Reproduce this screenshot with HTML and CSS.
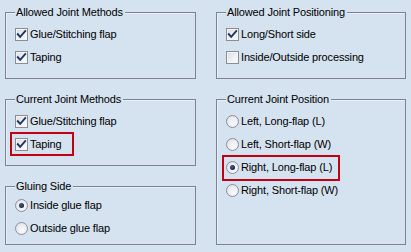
FILE: index.html
```html
<!DOCTYPE html>
<html>
<head>
<meta charset="utf-8">
<link rel="stylesheet" href="styles.css">
</head>
<body>
<div class="page">
  <div class="col col-left">
    <div class="group g-short">
      <div class="title">Allowed Joint Methods</div>
      <div class="rows">
        <div class="row"><span class="cb"><svg viewBox="0 0 11 11"><path d="M1.8 5.2 L4.2 7.8 L9.2 2.2"/></svg></span><span class="lbl">Glue/Stitching flap</span></div>
        <div class="row"><span class="cb"><svg viewBox="0 0 11 11"><path d="M1.8 5.2 L4.2 7.8 L9.2 2.2"/></svg></span><span class="lbl">Taping</span></div>
      </div>
    </div>
    <div class="group g-short">
      <div class="title">Current Joint Methods</div>
      <div class="rows">
        <div class="row"><span class="cb"><svg viewBox="0 0 11 11"><path d="M1.8 5.2 L4.2 7.8 L9.2 2.2"/></svg></span><span class="lbl">Glue/Stitching flap</span></div>
        <div class="row hl hl-a"><span class="cb"><svg viewBox="0 0 11 11"><path d="M1.8 5.2 L4.2 7.8 L9.2 2.2"/></svg></span><span class="lbl">Taping</span></div>
      </div>
    </div>
    <div class="group g-glue">
      <div class="title">Gluing Side</div>
      <div class="rows rows-tight">
        <div class="row"><span class="rb on"></span><span class="lbl">Inside glue flap</span></div>
        <div class="row"><span class="rb"></span><span class="lbl">Outside glue flap</span></div>
      </div>
    </div>
  </div>
  <div class="col col-right">
    <div class="group g-short">
      <div class="title">Allowed Joint Positioning</div>
      <div class="rows">
        <div class="row"><span class="cb"><svg viewBox="0 0 11 11"><path d="M1.8 5.2 L4.2 7.8 L9.2 2.2"/></svg></span><span class="lbl">Long/Short side</span></div>
        <div class="row"><span class="cb"></span><span class="lbl">Inside/Outside processing</span></div>
      </div>
    </div>
    <div class="group g-tall">
      <div class="title">Current Joint Position</div>
      <div class="rows">
        <div class="row"><span class="rb"></span><span class="lbl">Left, Long-flap (L)</span></div>
        <div class="row"><span class="rb"></span><span class="lbl">Left, Short-flap (W)</span></div>
        <div class="row hl hl-b"><span class="rb on"></span><span class="lbl">Right, Long-flap (L)</span></div>
        <div class="row"><span class="rb"></span><span class="lbl">Right, Short-flap (W)</span></div>
      </div>
    </div>
  </div>
</div>
</body>
</html>
```

FILE: styles.css
```css
html, body {
  margin: 0;
  padding: 0;
  background: #d5e2f0;
}
body {
  width: 411px;
  height: 252px;
  overflow: hidden;
  font-family: "Liberation Sans", Arial, sans-serif;
  font-size: 11px;
  letter-spacing: -0.15px;
  color: #000;
}
.page {
  display: flex;
  gap: 20px;
  padding: 12px 0 0 5px;
}
.col {
  display: flex;
  flex-direction: column;
  gap: 20px;
}
.col-left { width: 191px; }
.col-right { width: 190px; }
.group {
  box-sizing: border-box;
  border: 1px solid #7a8494;
  box-shadow: inset 1px 1px 0 #e6eef7;
  padding: 0 9px;
}
.g-short { height: 67px; }
.g-glue { height: 59px; }
.g-tall { height: 146px; }
.title {
  margin: -7px 0 0 0;
  padding: 0 2px 0 1px;
  width: max-content;
  line-height: 13px;
  background: #d5e2f0;
}
.rows {
  margin-top: 4px;
  display: flex;
  flex-direction: column;
}
.rows-tight { margin-top: 1px; }
.row {
  position: relative;
  display: flex;
  align-items: center;
  height: 23px;
  width: max-content;
}
.lbl {
  margin-left: 2px;
  line-height: 13px;
}
.cb {
  box-sizing: border-box;
  width: 13px;
  height: 13px;
  border: 1px solid #8a8d92;
  background: linear-gradient(135deg, #d9dbdf 0%, #f2f3f5 60%, #fbfbfb 100%);
  box-shadow: inset 0 0 0 1px #f6f6f6;
  display: flex;
}
.cb svg {
  width: 11px;
  height: 11px;
}
.cb path {
  fill: none;
  stroke: #1d3565;
  stroke-width: 1.9;
  stroke-linecap: square;
  stroke-linejoin: miter;
}
.rb {
  box-sizing: border-box;
  width: 13px;
  height: 13px;
  border-radius: 50%;
  border: 1px solid #8c9096;
  background: radial-gradient(circle at 60% 65%, #fbfbfc 0%, #eef0f4 40%, #d8dbe3 100%);
  display: flex;
  align-items: center;
  justify-content: center;
}
.rb.on::after {
  content: "";
  width: 5px;
  height: 5px;
  border-radius: 50%;
  background: radial-gradient(circle at 40% 40%, #4a5e86 0%, #1a2a4c 60%, #0f1a33 100%);
}
.hl::after {
  content: "";
  position: absolute;
  border: 2px solid #c10012;
}
.hl-a::after {
  top: -1px;
  bottom: 0;
  left: -5px;
  right: -12px;
}
.hl-b::after {
  top: -1px;
  bottom: -2px;
  left: -4px;
  right: -8px;
}
```
